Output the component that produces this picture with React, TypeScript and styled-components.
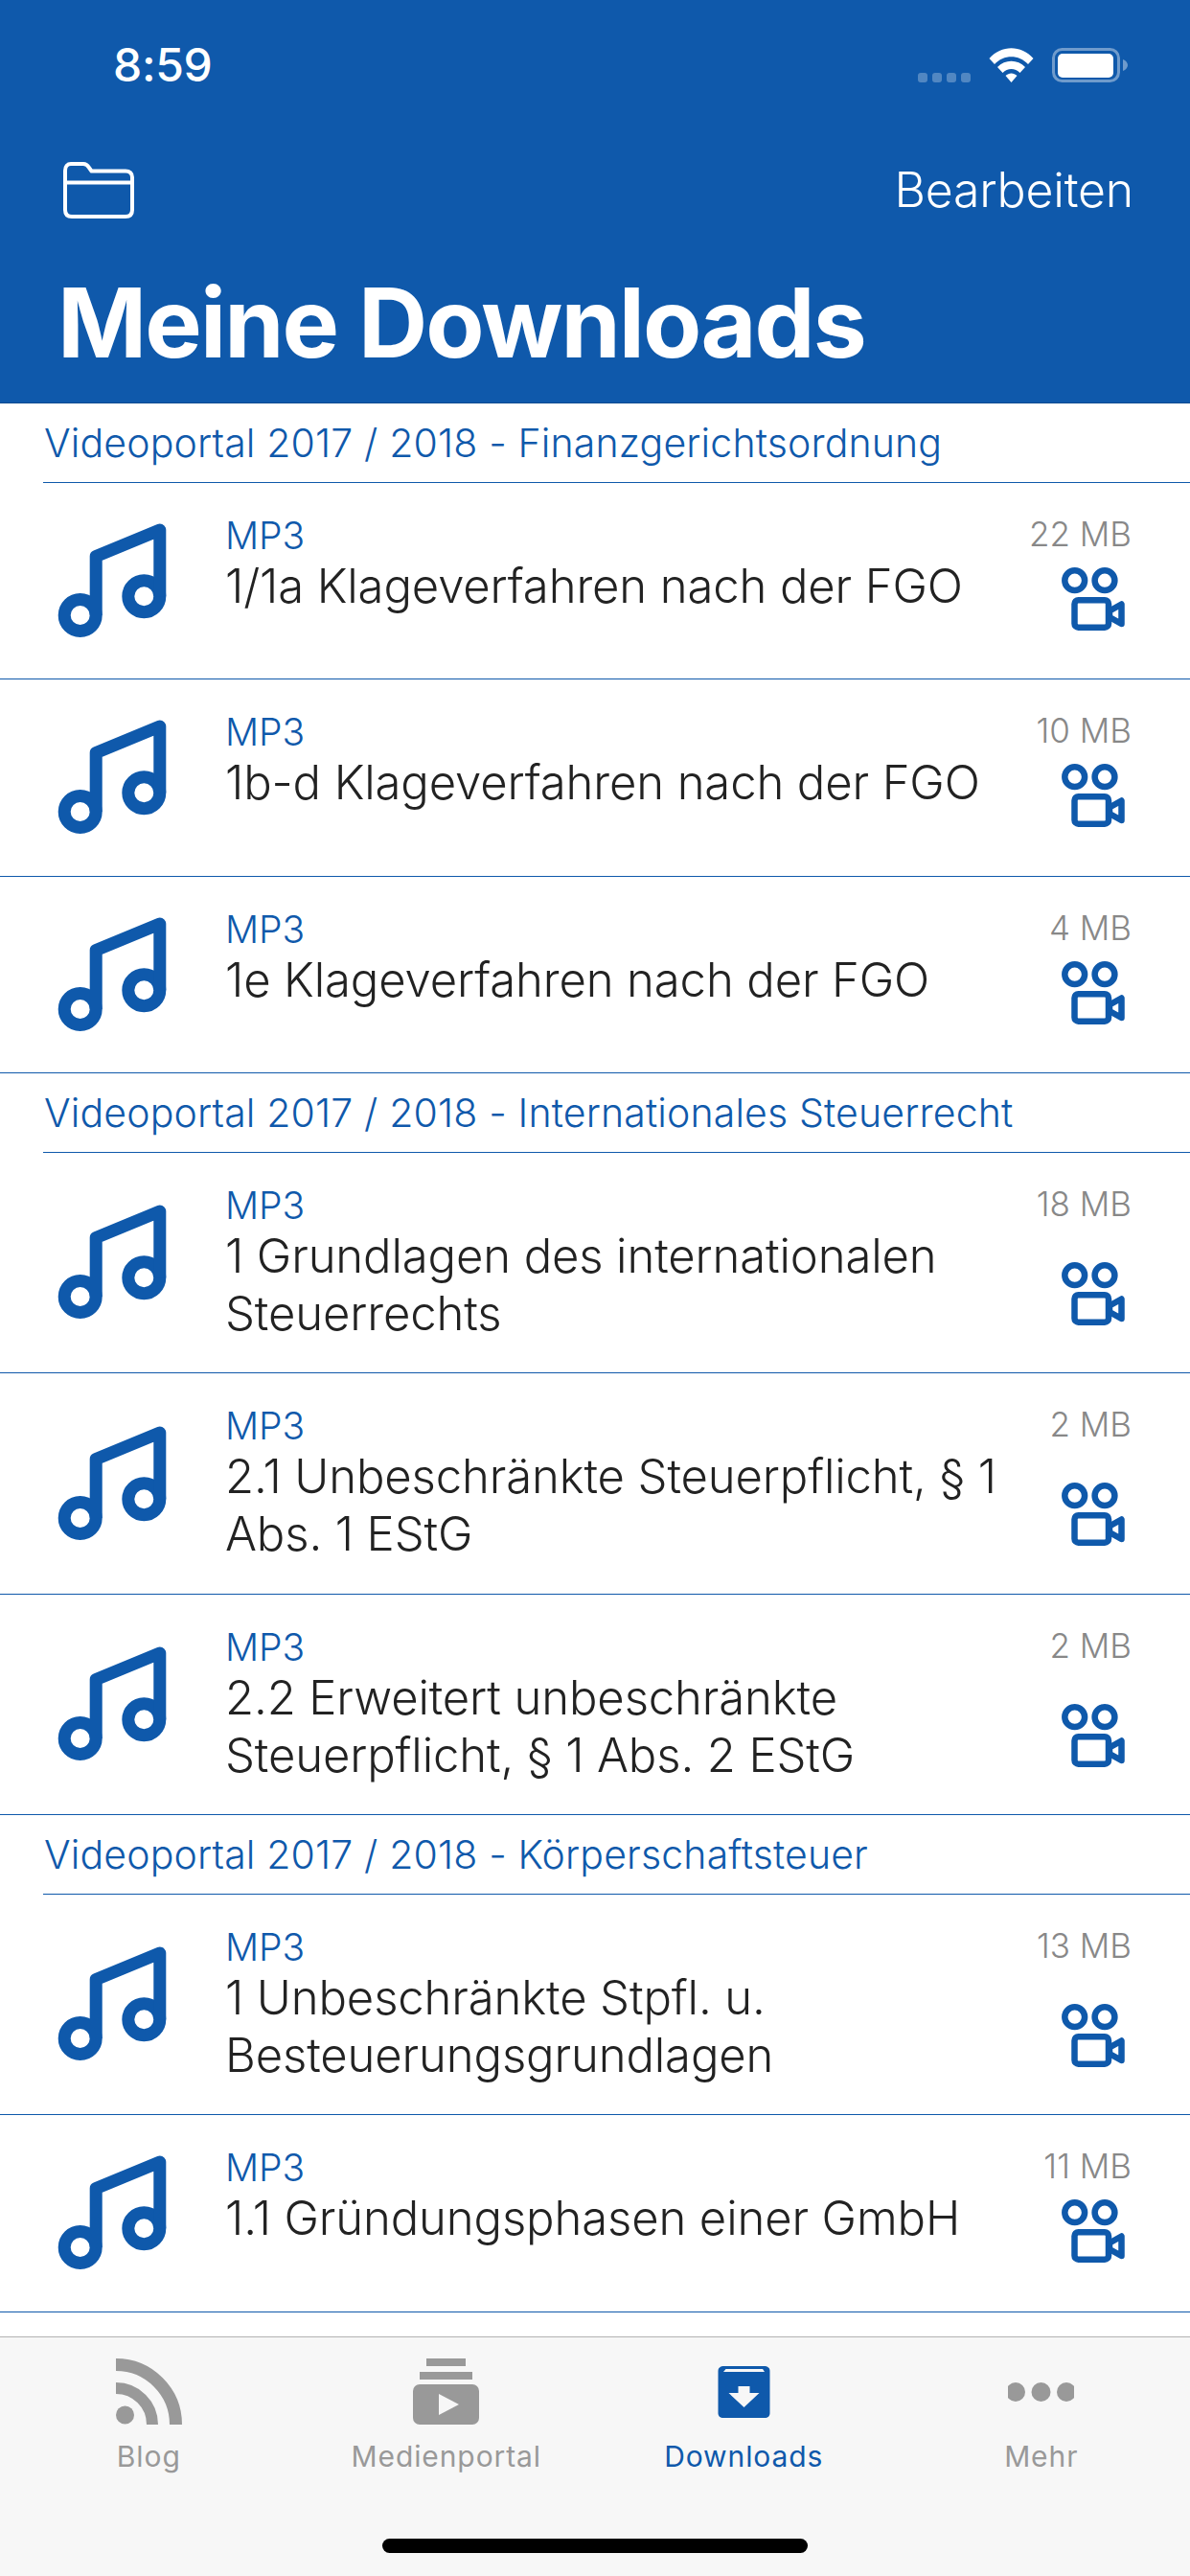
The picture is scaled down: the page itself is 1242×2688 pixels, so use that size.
import React from 'react';
import styled, { createGlobalStyle } from 'styled-components';

const BLUE = '#0f59ab';
const GREY = '#999999';

const GlobalStyle = createGlobalStyle`
	html, body {
		margin: 0;
		padding: 0;
		background: #ffffff;
	}
	* {
		box-sizing: border-box;
	}
`;

const Page = styled.div`
	display: flex;
	flex-direction: column;
	width: 1242px;
	height: 2688px;
	overflow: hidden;
	font-family: Inter, 'Liberation Sans', sans-serif;
	background: #ffffff;
`;

const Header = styled.header`
	flex: none;
	height: 421px;
	background: ${BLUE};
	border-bottom: 1px solid #0a4a8f;
	color: #ffffff;
`;

const StatusBar = styled.div`
	display: flex;
	align-items: center;
	height: 135px;
	padding: 0 65px 0 118px;
`;

const Time = styled.div`
	flex: 1;
	font-size: 48px;
	font-weight: 500;
	letter-spacing: -0.3px;
	line-height: 136px;
`;

const StatusIcons = styled.div`
	display: flex;
	align-items: flex-end;
	height: 36px;
`;

const SignalDots = styled.div`
	display: flex;
	gap: 5px;
	margin-right: 19px;
`;

const SignalDot = styled.span`
	width: 10px;
	height: 10px;
	border-radius: 3px;
	background: rgba(255, 255, 255, 0.28);
`;

const Battery = styled.svg`
	margin-left: 19px;
`;

const NavRow = styled.div`
	display: flex;
	align-items: center;
	justify-content: space-between;
	height: 126px;
	padding: 0 59px 0 66px;
`;

const NavAction = styled.div`
	font-size: 50px;
	font-weight: 300;
	line-height: 60px;
	letter-spacing: -0.2px;
`;

const Title = styled.h1`
	margin: 16px 0 0;
	padding-left: 60px;
	font-size: 100px;
	font-weight: 700;
	line-height: 120px;
	letter-spacing: -1.9px;
`;

const List = styled.main`
	flex: 1;
	overflow: hidden;
`;

const SectionHeader = styled.div`
	display: flex;
	align-items: center;
	height: 83px;
	margin-left: 45px;
	padding-left: 1px;
	border-bottom: 1px solid ${BLUE};
	color: ${BLUE};
	font-size: 41px;
	font-weight: 300;
	letter-spacing: 0.15px;
`;

const Row = styled.div`
	display: flex;
	min-height: 205.33px;
	padding: 31px 61px 31.33px 60px;
	border-bottom: 1px solid ${BLUE};
`;

const MusicIcon = styled.svg`
	flex: none;
	align-self: center;
	margin-right: 61px;
`;

const RowText = styled.div`
	flex: 1;
	min-width: 0;
`;

const Kind = styled.div`
	color: ${BLUE};
	font-size: 39px;
	font-weight: 300;
	line-height: 47px;
`;

const RowTitle = styled.div`
	color: #222222;
	font-size: 49px;
	font-weight: 300;
	line-height: 60px;
	letter-spacing: -0.12px;
`;

const RowMeta = styled.div`
	flex: none;
	display: flex;
	flex-direction: column;
	align-items: flex-end;
	width: 120px;
`;

const Size = styled.div`
	color: #888888;
	font-size: 35px;
	font-weight: 300;
	line-height: 45px;
	white-space: nowrap;
`;

const VideoIcon = styled.svg<{ $tall: boolean }>`
	margin-top: ${(p) => (p.$tall ? 38 : 12)}px;
	margin-right: 7px;
`;

const TabBar = styled.nav`
	flex: none;
	display: flex;
	flex-direction: column;
	align-items: center;
	height: 250px;
	padding-top: 22px;
	background: #f7f7f7;
	border-top: 1px solid #b2b2b2;
`;

const Tabs = styled.div`
	display: grid;
	grid-template-columns: repeat(4, 1fr);
	width: 100%;
`;

const Tab = styled.div<{ $active?: boolean }>`
	display: flex;
	flex-direction: column;
	align-items: center;
	color: ${(p) => (p.$active ? BLUE : GREY)};
	font-size: 30px;
	font-weight: 400;
	line-height: 40px;
	letter-spacing: 0.9px;
`;

const TabLabel = styled.div`
	margin-top: 13px;
`;

const HomeIndicator = styled.div`
	width: 444px;
	height: 15px;
	margin-top: 66px;
	border-radius: 8px;
	background: #000000;
`;

type Item = { title: string; size: string };
type Section = { name: string; items: Item[] };

const sections: Section[] = [
	{
		name: 'Videoportal 2017 / 2018 - Finanzgerichtsordnung',
		items: [
			{ title: '1/1a Klageverfahren nach der FGO', size: '22 MB' },
			{ title: '1b-d Klageverfahren nach der FGO', size: '10 MB' },
			{ title: '1e Klageverfahren nach der FGO', size: '4 MB' },
		],
	},
	{
		name: 'Videoportal 2017 / 2018 - Internationales Steuerrecht',
		items: [
			{ title: '1 Grundlagen des internationalen Steuerrechts', size: '18 MB' },
			{ title: '2.1 Unbeschränkte Steuerpflicht, § 1 Abs. 1 EStG', size: '2 MB' },
			{ title: '2.2 Erweitert unbeschränkte Steuerpflicht, § 1 Abs. 2 EStG', size: '2 MB' },
		],
	},
	{
		name: 'Videoportal 2017 / 2018 - Körperschaftsteuer',
		items: [
			{ title: '1 Unbeschränkte Stpfl. u. Besteuerungsgrundlagen', size: '13 MB' },
			{ title: '1.1 Gründungsphasen einer GmbH', size: '11 MB' },
		],
	},
];

const Wifi = () => (
	<svg width='47' height='36' viewBox='0 0 47 36' fill='#ffffff'>
		<path d='M0.5 11 C13 -3.5 34 -3.5 46.5 11 L41 17 C31.5 6.5 15.5 6.5 6 17 Z' />
		<path d='M9 20 C17 11.5 30 11.5 38 20 L32.5 26 C27.5 20.5 19.5 20.5 14.5 26 Z' />
		<path d='M17.5 29 C21 25.5 26 25.5 29.5 29 L23.5 36 Z' />
	</svg>
);

const BatteryIcon = () => (
	<Battery width='79' height='36' viewBox='0 0 79 36'>
		<rect x='1.5' y='1.5' width='68' height='33' rx='9' fill='none' stroke='#ffffff' strokeOpacity='0.4' strokeWidth='3' />
		<rect x='6' y='6' width='58' height='25' rx='5' fill='#ffffff' />
		<path d='M74 12 C77 13 79 15.5 79 18 C79 20.5 77 23 74 24 Z' fill='#ffffff' fillOpacity='0.4' />
	</Battery>
);

const FolderIcon = () => (
	<svg width='74' height='59' viewBox='0 0 74 59' fill='none' stroke='#ffffff' strokeWidth='4' strokeLinejoin='round'>
		<path d='M2 9 C2 4.5 4.5 2 8 2 H21 C24 2 25.5 3.5 27 6 L29.5 9.5 H65 C69.5 9.5 72 12 72 16 V50 C72 54.5 69.5 57 65 57 H9 C4.5 57 2 54.5 2 50 Z' />
		<path d='M2 21.5 H72' />
	</svg>
);

const Music = () => (
	<MusicIcon width='114' height='120' viewBox='0 0 114 120' fill='none' stroke={BLUE} strokeWidth='13' strokeLinejoin='round'>
		<circle cx='23.7' cy='96' r='16.5' />
		<circle cx='90.3' cy='76.3' r='16.5' />
		<path d='M40.2 96 V34.5 L106.8 7 V76.3' />
	</MusicIcon>
);

const Video = ({ tall }: { tall: boolean }) => (
	<VideoIcon $tall={tall} width='66' height='66' viewBox='0 0 66 66' fill='none' stroke={BLUE} strokeWidth='6.5' strokeLinejoin='round'>
		<circle cx='13.7' cy='13.7' r='10.4' />
		<circle cx='45' cy='13.7' r='10.4' />
		<rect x='13.5' y='34.2' width='35.5' height='28.5' rx='4' />
		<path d='M50 45.5 L62.5 38.5 V59 L50 52 Z' />
	</VideoIcon>
);

const BlogIcon = () => (
	<svg width='69' height='69' viewBox='0 0 69 69' fill='none' stroke={GREY}>
		<path d='M0 6.5 A62.5 62.5 0 0 1 62.5 69' strokeWidth='13' />
		<path d='M0 31 A38 38 0 0 1 38 69' strokeWidth='12' />
		<circle cx='9.5' cy='59' r='9.5' fill={GREY} stroke='none' />
	</svg>
);

const MediaIcon = () => (
	<svg width='69' height='69' viewBox='0 0 69 69' fill={GREY}>
		<rect x='14' y='0' width='41' height='8' />
		<rect x='7' y='14' width='55' height='8' />
		<rect x='0' y='27' width='69' height='42' rx='7' />
		<path d='M27 37 L48 48 L27 59 Z' fill='#f7f7f7' />
	</svg>
);

const DownloadsIcon = () => (
	<svg width='69' height='69' viewBox='0 0 69 69'>
		<path d='M14 8 H55 C59.5 8 61.5 10 61.5 13 V57 C61.5 60 59.5 62 56 62 H13 C9.5 62 7.5 60 7.5 57 V13 C7.5 10 9.5 8 14 8 Z' fill={BLUE} />
		<path d='M13 14 L15.5 11 H54 L56 14 Z' fill='#f7f7f7' />
		<path d='M28.5 29 H40.5 V36 H50.5 L34.5 51 L18.5 36 H28.5 Z' fill='#f7f7f7' />
	</svg>
);

const MoreIcon = () => (
	<svg width='69' height='69' viewBox='0 0 69 69' fill={GREY}>
		<circle cx='8' cy='35' r='10' />
		<circle cx='34.5' cy='35' r='10' />
		<circle cx='61' cy='35' r='10' />
	</svg>
);

const tabs = [
	{ label: 'Blog', icon: <BlogIcon /> },
	{ label: 'Medienportal', icon: <MediaIcon /> },
	{ label: 'Downloads', icon: <DownloadsIcon />, active: true },
	{ label: 'Mehr', icon: <MoreIcon /> },
];

const App: React.FC = () => {
	return (
		<Page>
			<GlobalStyle />
			<Header>
				<StatusBar>
					<Time>8:59</Time>
					<StatusIcons>
						<SignalDots>
							{[0, 1, 2, 3].map((i) => (
								<SignalDot key={i} />
							))}
						</SignalDots>
						<Wifi />
						<BatteryIcon />
					</StatusIcons>
				</StatusBar>
				<NavRow>
					<FolderIcon />
					<NavAction>Bearbeiten</NavAction>
				</NavRow>
				<Title>Meine Downloads</Title>
			</Header>
			<List>
				{sections.map((section) => (
					<section key={section.name}>
						<SectionHeader>{section.name}</SectionHeader>
						{section.items.map((item) => (
							<Row key={item.title}>
								<Music />
								<RowText>
									<Kind>MP3</Kind>
									<RowTitle>{item.title}</RowTitle>
								</RowText>
								<RowMeta>
									<Size>{item.size}</Size>
									<Video tall={item.title.length > 36} />
								</RowMeta>
							</Row>
						))}
					</section>
				))}
			</List>
			<TabBar>
				<Tabs>
					{tabs.map((tab) => (
						<Tab key={tab.label} $active={tab.active}>
							{tab.icon}
							<TabLabel>{tab.label}</TabLabel>
						</Tab>
					))}
				</Tabs>
				<HomeIndicator />
			</TabBar>
		</Page>
	);
};

export default App;
